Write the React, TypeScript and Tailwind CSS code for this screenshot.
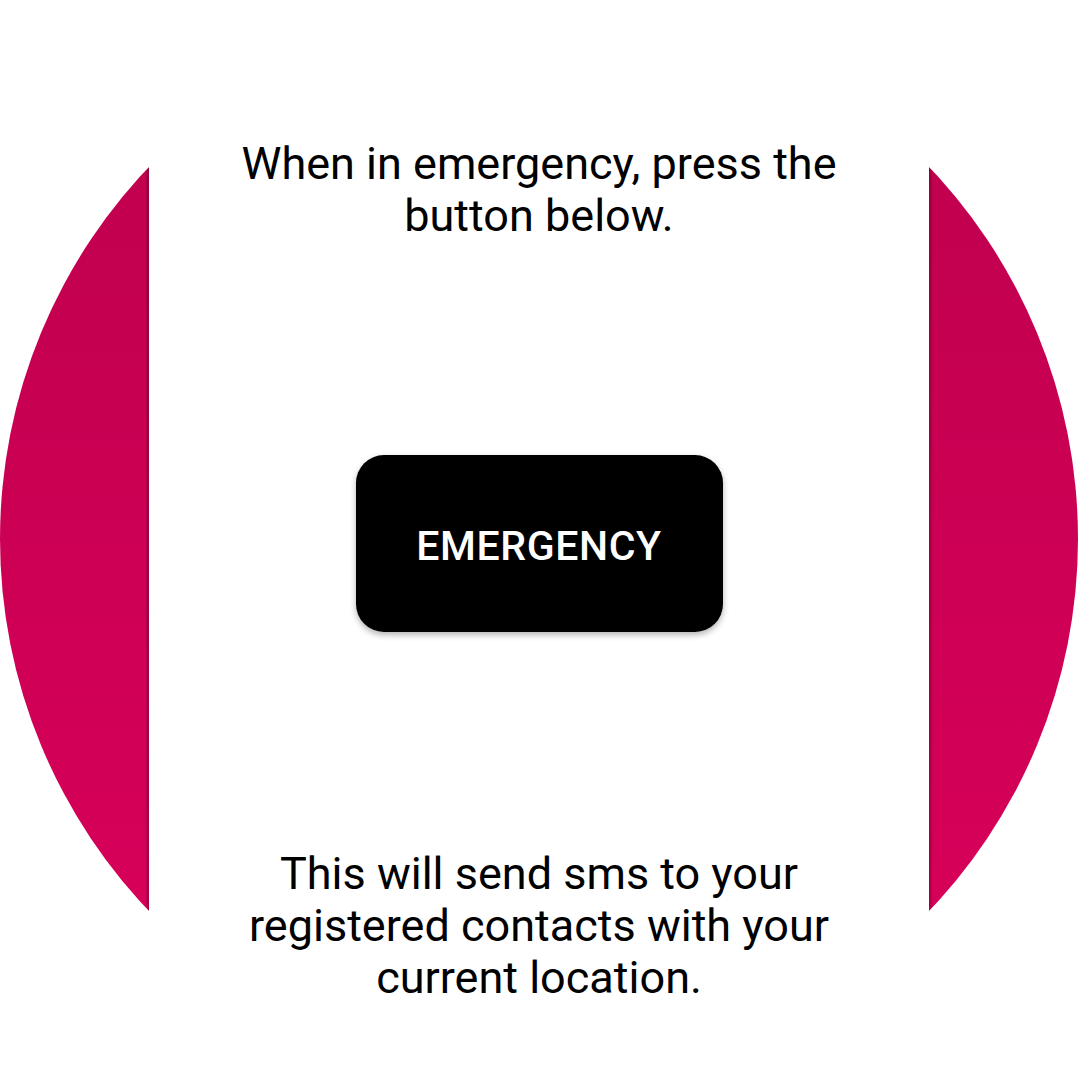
export default function App() {
  return (
    <div className="w-[1078px] h-[1078px] bg-white" style={{ fontFamily: 'Roboto, "Noto Sans", sans-serif' }}>
      {/* circle backdrop, with a soft edge shadow next to the white panel */}
      <div className="w-[1078px] h-[1078px] rounded-full bg-[linear-gradient(to_right,transparent_145px,rgba(0,0,0,0.28)_149px,transparent_149px,transparent_929px,rgba(0,0,0,0.28)_929px,transparent_933px),linear-gradient(to_bottom,#bc004c,#dc005c)] flex justify-center">
        <div className="w-[780px] h-full bg-white flex flex-col items-center pt-[138px]">
          <p className="text-[45px] leading-[52px] text-black text-center w-[660px]">
            When in emergency, press the button below.
          </p>

          <button className="mt-[213px] w-[367px] h-[177px] pt-[6px] rounded-[28px] bg-black text-white text-[41px] font-medium tracking-[0.015em] shadow-[0_3px_6px_rgba(0,0,0,0.3)]">
            EMERGENCY
          </button>

          <p className="mt-[216px] text-[45px] leading-[52px] text-black text-center w-[660px]">
            This will send sms to your registered contacts with your current location.
          </p>
        </div>
      </div>
    </div>
  );
}
